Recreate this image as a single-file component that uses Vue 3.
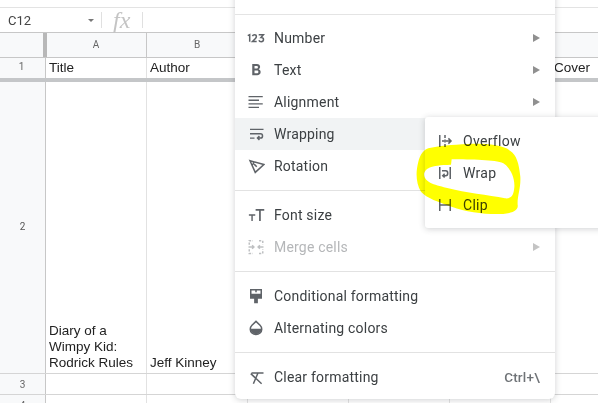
<script setup>
const items = [
  { label: 'Number', icon: 'number', arrow: true },
  { label: 'Text', icon: 'bold', arrow: true },
  { label: 'Alignment', icon: 'align', arrow: true },
  { label: 'Wrapping', icon: 'wrapping', arrow: true, active: true },
  { label: 'Rotation', icon: 'rotation', arrow: true },
  { divider: true },
  { label: 'Font size', icon: 'fontsize', arrow: true },
  { label: 'Merge cells', icon: 'merge', arrow: true, disabled: true },
  { divider: true },
  { label: 'Conditional formatting', icon: 'brush' },
  { label: 'Alternating colors', icon: 'drop' },
  { divider: true },
  { label: 'Clear formatting', icon: 'clear', shortcut: 'Ctrl+\\' }
]

const subItems = [
  { label: 'Overflow', icon: 'overflow' },
  { label: 'Wrap', icon: 'wrap' },
  { label: 'Clip', icon: 'clip' }
]

const colHeaders = ['A', 'B', '', '', '', '', '']
</script>

<template>
  <div class="sheet">
    <div class="top-strip"></div>

    <div class="formula-bar">
      <div class="name-box">
        <span>C12</span>
        <i class="caret"></i>
      </div>
      <span class="fx">fx</span>
      <span class="fx-sep"></span>
    </div>

    <div class="col-headers">
      <div class="corner"></div>
      <div v-for="(c, i) in colHeaders" :key="i" class="col-head">{{ c }}</div>
    </div>

    <div class="row row-1">
      <div class="row-head">1</div>
      <div class="cell">Title</div>
      <div class="cell">Author</div>
      <div class="cell"></div>
      <div class="cell"></div>
      <div class="cell"></div>
      <div class="cell cover">Cover</div>
      <div class="cell"></div>
    </div>

    <div class="row row-2">
      <div class="row-head">2</div>
      <div class="cell">Diary of a<br>Wimpy Kid:<br>Rodrick Rules</div>
      <div class="cell">Jeff Kinney</div>
      <div class="cell"></div>
      <div class="cell"></div>
      <div class="cell"></div>
      <div class="cell"></div>
      <div class="cell"></div>
    </div>

    <div class="row row-3">
      <div class="row-head">3</div>
      <div v-for="n in 7" :key="n" class="cell"></div>
    </div>

    <div class="row row-4">
      <div class="row-head">4</div>
      <div v-for="n in 7" :key="n" class="cell"></div>
    </div>

    <!-- format menu -->
    <div class="menu">
      <template v-for="(item, i) in items" :key="i">
        <div v-if="item.divider" class="divider"></div>
        <div v-else :class="['menu-item', { active: item.active, disabled: item.disabled }]">
          <svg class="icon" viewBox="0 0 24 24">
            <path v-if="item.icon === 'number'" class="ln" d="M1 8.800 3.600 7.500V17M7.200 9.500C7.700 8.300 8.700 7.600 10 7.600c1.500 0 2.500 1 2.500 2.300 0 1.100-.6 2-1.600 3L7.300 16.500h5.600M15.600 7.800h6.200l-3.100 3.500c2 0 3.300 1.100 3.300 2.800 0 1.700-1.300 2.900-3.100 2.900-1.400 0-2.600-.7-3-1.900" />
            <path v-else-if="item.icon === 'bold'" class="fill" fill-rule="evenodd" d="M7 4h6.200c2.600 0 4.300 1.500 4.300 3.800 0 1.500-.8 2.600-1.900 3.200 1.500.5 2.600 1.900 2.600 3.800 0 2.800-2 4.200-4.700 4.200H7zM10 6.700v3.400h2.800c1.100 0 1.800-.7 1.800-1.700s-.7-1.700-1.800-1.700zM10 12.800v3.500h3.200c1.200 0 2-.7 2-1.800s-.8-1.700-2-1.700z" />
            <path v-else-if="item.icon === 'align'" class="fill" d="M2 4h19v1.700H2zM2 8.800h14v1.700H2zM2 13.500h19v1.700H2zM2 18.200h14v1.700H2z" />
            <g v-else-if="item.icon === 'wrapping'">
              <path class="fill" d="M4 5h18v1.800H4zM4 16.500h6v1.800H4z" />
              <path class="ln" d="M4 11.600h14c3.600 0 3.600 5.800 0 5.800H14.500M16.600 14.800 14 17.400l2.600 2.600" />
            </g>
            <path v-else-if="item.icon === 'rotation'" class="ln" stroke-width="1.800" d="M4 5 22.500 10 11 20.500zM8.800 6.400c.2 2-.5 3.800-2.200 4.900M13 13 9.500 9.500" />
            <path v-else-if="item.icon === 'fontsize'" class="fill" d="M11.500 4H23v2.200h-4.600V20h-2.300V6.200h-4.600zM2.500 11H11v1.900H7.700V20H5.800v-7.100H2.500z" />
            <g v-else-if="item.icon === 'merge'">
              <path class="ln" stroke-dasharray="3 2" d="M3 9V3.500h5M16 3.500h5V9M3 15v5.500h5M16 20.500h5V15" />
              <path class="ln" d="M2 12h7M6.800 9.600 9.200 12l-2.400 2.400M22 12h-7M17.200 9.600 14.800 12l2.400 2.400" />
            </g>
            <path v-else-if="item.icon === 'brush'" class="fill" fill-rule="evenodd" d="M4 2.500h16v13h-5.500v6h-5v-6H4zM6 4.500V9h12V4.500h-5v2.500h-2V4.500z" />
            <g v-else-if="item.icon === 'drop'">
              <path class="ln" d="M12 3.200 6.600 8.400c-3 3-3 7.500 0 10.300 3 2.800 7.800 2.800 10.800 0 3-2.800 3-7.300 0-10.300z" />
              <path class="fill" d="M4.600 13h14.800c0 4-3.200 7.200-7.400 7.200S4.600 17 4.600 13z" />
            </g>
            <path v-else-if="item.icon === 'clear'" class="ln" d="M6 6.500h16M5 7.500 19.500 21M14.500 7 8.500 21" />
          </svg>
          <span class="label">{{ item.label }}</span>
          <span v-if="item.shortcut" class="shortcut">{{ item.shortcut }}</span>
          <i v-if="item.arrow" class="arrow"></i>
        </div>
      </template>
    </div>

    <!-- wrapping submenu -->
    <div class="submenu">
      <div v-for="sub in subItems" :key="sub.label" class="sub-item">
        <svg class="icon" viewBox="0 0 24 24">
          <g v-if="sub.icon === 'overflow'">
            <path class="fill" d="M4 4h2v16H4zM11 4h2v4h-2zM11 10h2v1h-2zM11 13h2v1h-2zM11 16h2v4h-2z" />
            <path class="ln" d="M8 12h12M16.500 8.500 20 12l-3.500 3.500" />
          </g>
          <g v-else-if="sub.icon === 'wrap'">
            <path class="fill" d="M4 4h2v16H4zM18 4h2v16h-2z" />
            <path class="ln" stroke-width="1.700" d="M8 9h5c3.500 0 3.500 6.500 0 6.500H9M11.500 13 9 15.500 11.500 18" />
          </g>
          <path v-else class="fill" d="M4 4h2v16H4zM18 4h2v16h-2zM6 11h12v2H6z" />
        </svg>
        <span class="label">{{ sub.label }}</span>
      </div>
    </div>

    <!-- highlighter scribble -->
    <svg class="scribble" viewBox="0 0 549 390">
      <path fill-rule="evenodd" d="M40 145C70 137 110 135 160 132 210 130 265 135 285 152 305 165 312 190 316 230 318 265 306 290 308 315 312 335 280 344 245 342 200 342 150 335 110 320 70 305 35 295 18 275 2 250 2 215 10 185 15 165 25 150 40 145ZM27 222C32 205 42 196 108 194L110 178C170 180 240 178 265 190 288 205 300 235 298 262 296 285 290 297 270 295 220 285 150 278 100 265 65 255 28 250 27 222Z" />
    </svg>
  </div>
</template>

<style scoped>
.sheet {
  position: relative;
  width: 598px;
  height: 403px;
  overflow: hidden;
  background: #fff;
  font-family: "Liberation Sans", Arial, sans-serif;
  color: #222;
  filter: blur(0.35px);
}

.top-strip {
  height: 7px;
  border-bottom: 1px solid #e3e3e3;
}

.formula-bar {
  display: flex;
  align-items: center;
  height: 24px;
  border-bottom: 1px solid #c7c7c7;
  font-family: Roboto, sans-serif;
}

.name-box {
  display: flex;
  align-items: center;
  justify-content: space-between;
  box-sizing: border-box;
  width: 102px;
  height: 16px;
  padding: 0 7px 0 8px;
  border-right: 1px solid #e0e0e0;
  font-size: 13px;
  color: #444;
}

.caret {
  width: 0;
  height: 0;
  border-left: 3px solid transparent;
  border-right: 3px solid transparent;
  border-top: 3px solid #777;
}

.fx {
  width: 40px;
  padding-left: 11px;
  box-sizing: border-box;
  font-family: "Liberation Serif", serif;
  font-style: italic;
  font-size: 24px;
  line-height: 24px;
  color: #c4c4c4;
}

.fx-sep {
  width: 1px;
  height: 16px;
  background: #e0e0e0;
}

.col-headers,
.row {
  display: grid;
  grid-template-columns: 46px 101px 101px 101px 101px 101px 99px 1fr;
}

.col-headers {
  height: 24px;
  background: #f8f9fa;
  border-bottom: 1px solid #c7c7c7;
}

.corner {
  border-right: 4px solid #b8b8b8;
  margin-right: -1px;
  background: #f8f9fa;
}

.col-head {
  display: flex;
  align-items: center;
  justify-content: center;
  padding-bottom: 2px;
  border-right: 1px solid #c7c7c7;
  font-family: Roboto, sans-serif;
  font-size: 10px;
  color: #666;
}

.row-head {
  display: flex;
  align-items: center;
  justify-content: center;
  background: #f8f9fa;
  border-right: 1px solid #c7c7c7;
  font-family: Roboto, sans-serif;
  font-size: 10px;
  color: #666;
}

.cell {
  box-sizing: border-box;
  display: flex;
  align-items: flex-end;
  padding: 0 3px 2px 3px;
  border-right: 1px solid #e2e2e2;
  font-size: 13.5px;
  line-height: 16px;
  color: #222;
}

.row-1 {
  height: 20px;
  border-bottom: 4px solid #c4c6c8;
}

.row-1 .row-head {
  padding: 0 2px 3px 0;
}

.row-2 {
  height: 291px;
  border-bottom: 1px solid #d5d5d5;
}

.row-2 .row-head {
  padding-bottom: 2px;
  color: #555;
}

.row-3 {
  height: 20px;
  border-bottom: 1px solid #d5d5d5;
}

.row-4 {
  height: 20px;
}

.menu {
  position: absolute;
  top: -10px;
  left: 235px;
  width: 320px;
  padding-top: 24px;
  padding-bottom: 6px;
  background: #fff;
  border-radius: 0 0 6px 6px;
  box-shadow: 0 1px 6px rgba(60, 64, 67, 0.24);
  font-family: Roboto, sans-serif;
  font-size: 14px;
  letter-spacing: 0.2px;
  color: #3c4043;
}

.menu::before {
  content: "";
  display: block;
  height: 1px;
  margin-bottom: 7px;
  background: #e4e4e4;
}

.menu-item {
  display: flex;
  align-items: center;
  height: 32px;
  padding-left: 12px;
  padding-right: 15px;
}

.menu-item.active {
  background: #f1f3f4;
}

.menu-item.disabled {
  color: #b5b7b9;
}

.menu-item.disabled .icon {
  opacity: 0.4;
}

.icon {
  flex: none;
  width: 18px;
  height: 18px;
  margin-right: 9px;
}

.label {
  flex: 1;
  white-space: nowrap;
}

.shortcut {
  color: #6f7377;
  font-weight: 500;
  font-size: 13.5px;
}

.arrow {
  width: 0;
  height: 0;
  border-top: 4px solid transparent;
  border-bottom: 4px solid transparent;
  border-left: 7px solid #909090;
}

.menu-item.disabled .arrow {
  border-left-color: #c4c4c4;
}

.divider {
  height: 1px;
  margin: 8px 0;
  background: #e2e2e2;
}

.fill {
  fill: #5f6368;
}

.ln {
  fill: none;
  stroke: #5f6368;
  stroke-width: 2;
}

.submenu {
  position: absolute;
  top: 117px;
  left: 425px;
  width: 200px;
  height: 111px;
  box-sizing: border-box;
  padding-top: 8px;
  background: #fff;
  border-radius: 3px;
  box-shadow: 0 1px 6px rgba(60, 64, 67, 0.24);
  font-family: Roboto, sans-serif;
  font-size: 14px;
  letter-spacing: 0.3px;
  color: #3c4043;
}

.sub-item {
  display: flex;
  align-items: center;
  height: 32px;
  padding-left: 11px;
}

.scribble {
  position: absolute;
  top: 100px;
  left: 415px;
  width: 183px;
  height: 130px;
  fill: #ffff00;
  mix-blend-mode: multiply;
}
</style>
